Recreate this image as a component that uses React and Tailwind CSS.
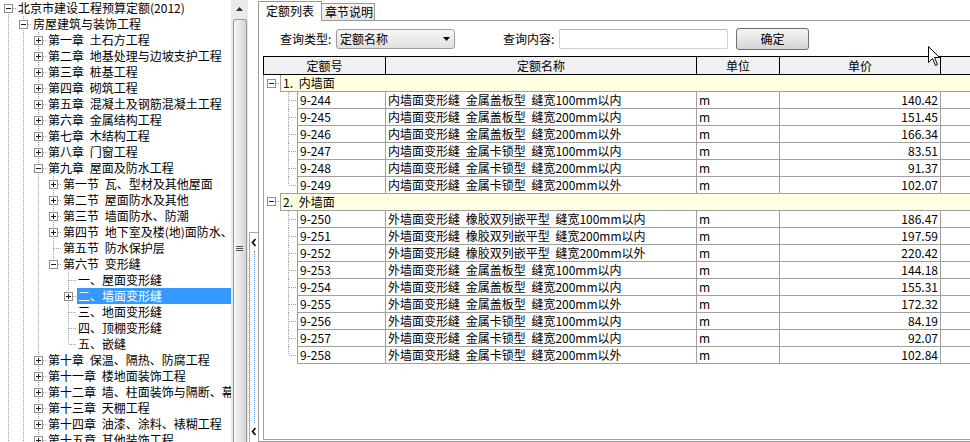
import React from "react";

const treeRows = [
  { level: 0, label: "北京市建设工程预算定额(2012)", box: "minus" },
  { level: 1, label: "房屋建筑与装饰工程", box: "minus" },
  { level: 2, label: "第一章 土石方工程", box: "plus" },
  { level: 2, label: "第二章 地基处理与边坡支护工程", box: "plus" },
  { level: 2, label: "第三章 桩基工程", box: "plus" },
  { level: 2, label: "第四章 砌筑工程", box: "plus" },
  { level: 2, label: "第五章 混凝土及钢筋混凝土工程", box: "plus" },
  { level: 2, label: "第六章 金属结构工程", box: "plus" },
  { level: 2, label: "第七章 木结构工程", box: "plus" },
  { level: 2, label: "第八章 门窗工程", box: "plus" },
  { level: 2, label: "第九章 屋面及防水工程", box: "minus" },
  { level: 3, label: "第一节 瓦、型材及其他屋面", box: "plus" },
  { level: 3, label: "第二节 屋面防水及其他", box: "plus" },
  { level: 3, label: "第三节 墙面防水、防潮", box: "plus" },
  { level: 3, label: "第四节 地下室及楼(地)面防水、防潮", box: "plus" },
  { level: 3, label: "第五节 防水保护层" },
  { level: 3, label: "第六节 变形缝", box: "minus" },
  { level: 4, label: "一、屋面变形缝" },
  { level: 4, label: "二、墙面变形缝", box: "plus", selected: true },
  { level: 4, label: "三、地面变形缝" },
  { level: 4, label: "四、顶棚变形缝" },
  { level: 4, label: "五、嵌缝" },
  { level: 2, label: "第十章 保温、隔热、防腐工程", box: "plus" },
  { level: 2, label: "第十一章 楼地面装饰工程", box: "plus" },
  { level: 2, label: "第十二章 墙、柱面装饰与隔断、幕墙工程", box: "plus" },
  { level: 2, label: "第十三章 天棚工程", box: "plus" },
  { level: 2, label: "第十四章 油漆、涂料、裱糊工程", box: "plus" },
  { level: 2, label: "第十五章 其他装饰工程", box: "plus" },
];

// the list goes on below the visible part: more siblings at levels 2, 1 and 0
const levels = [...treeRows.map((r) => r.level), 2, 1, 0];

function hasNextAt(i, level) {
  for (let j = i + 1; j < levels.length; j++) {
    if (levels[j] < level) return false;
    if (levels[j] === level) return true;
  }
  return false;
}

const groups = [
  {
    title: "1. 内墙面",
    items: [
      ["9-244", "内墙面变形缝 金属盖板型 缝宽100mm以内", "140.42"],
      ["9-245", "内墙面变形缝 金属盖板型 缝宽200mm以内", "151.45"],
      ["9-246", "内墙面变形缝 金属盖板型 缝宽200mm以外", "166.34"],
      ["9-247", "内墙面变形缝 金属卡锁型 缝宽100mm以内", "83.51"],
      ["9-248", "内墙面变形缝 金属卡锁型 缝宽200mm以内", "91.37"],
      ["9-249", "内墙面变形缝 金属卡锁型 缝宽200mm以外", "102.07"],
    ],
  },
  {
    title: "2. 外墙面",
    items: [
      ["9-250", "外墙面变形缝 橡胶双列嵌平型 缝宽100mm以内", "186.47"],
      ["9-251", "外墙面变形缝 橡胶双列嵌平型 缝宽200mm以内", "197.59"],
      ["9-252", "外墙面变形缝 橡胶双列嵌平型 缝宽200mm以外", "220.42"],
      ["9-253", "外墙面变形缝 金属盖板型 缝宽100mm以内", "144.18"],
      ["9-254", "外墙面变形缝 金属盖板型 缝宽200mm以内", "155.31"],
      ["9-255", "外墙面变形缝 金属盖板型 缝宽200mm以外", "172.32"],
      ["9-256", "外墙面变形缝 金属卡锁型 缝宽100mm以内", "84.19"],
      ["9-257", "外墙面变形缝 金属卡锁型 缝宽200mm以内", "92.07"],
      ["9-258", "外墙面变形缝 金属卡锁型 缝宽200mm以外", "102.84"],
    ],
  },
];

const DOT = { stroke: "#a0a0a0", strokeDasharray: "1 1" };

function ExpandBox({ box }) {
  return (
    <>
      <rect x="3.5" y="4.5" width="8" height="8" fill="#fff" stroke="#8f8f8f" />
      <line x1="5" y1="8.5" x2="10" y2="8.5" stroke="#1c1c1c" />
      {box === "plus" && <line x1="7.5" y1="6" x2="7.5" y2="11" stroke="#1c1c1c" />}
    </>
  );
}

function Connector({ top, bottom, box, width = 15, height = 16 }) {
  return (
    <svg width={width} height={height} className="block shrink-0">
      {top && <line x1="7.5" y1="0" x2="7.5" y2="8" {...DOT} />}
      {bottom && <line x1="7.5" y1="8" x2="7.5" y2={height} {...DOT} />}
      <line x1="8" y1="8.5" x2={width} y2="8.5" {...DOT} />
      {box && <ExpandBox box={box} />}
    </svg>
  );
}

function Guide({ on }) {
  return (
    <svg width="15" height="16" className="block shrink-0">
      {on && <line x1="7.5" y1="0" x2="7.5" y2="16" {...DOT} />}
    </svg>
  );
}

function Chevron() {
  return (
    <svg width="6" height="9" className="block">
      <polyline points="4.5,1 1.5,4.5 4.5,8" fill="none" stroke="#000" strokeWidth="1.6" />
    </svg>
  );
}

function TreePanel() {
  return (
    <div className="w-[248px] h-full flex bg-white">
      <div className="w-[231px] h-full overflow-hidden">
        {treeRows.map((r, i) => (
          <div key={i} className="flex h-[16px] pl-px">
            {Array.from({ length: r.level }).map((_, a) => (
              <Guide key={a} on={hasNextAt(i, a)} />
            ))}
            <Connector top={i > 0} bottom={hasNextAt(i, r.level)} box={r.box} />
            <div
              className={`ml-px pl-px flex-1 whitespace-nowrap leading-[16px] ${
                r.selected ? "bg-[#3399ff] text-white" : "text-black"
              }`}
            >
              {r.label}
            </div>
          </div>
        ))}
      </div>
      <div className="w-[17px] h-full bg-[#e9e9e9] flex flex-col items-center">
        <div className="h-[18px] w-full flex items-center justify-center">
          <svg width="7" height="4" className="block">
            <polygon points="0,4 3.5,0 7,4" fill="#333" />
          </svg>
        </div>
        <div className="mt-px w-[14px] flex-1 rounded-t-[3px] border border-b-0 border-[#9a9a9a] bg-gradient-to-r from-[#f7f7f7] via-[#e8e8e8] to-[#d3d3d3] flex flex-col items-center">
          <svg width="7" height="6" className="block mt-[226px]">
            <line x1="0" y1="0.5" x2="7" y2="0.5" stroke="#555" />
            <line x1="0" y1="2.5" x2="7" y2="2.5" stroke="#555" />
            <line x1="0" y1="4.5" x2="7" y2="4.5" stroke="#555" />
          </svg>
        </div>
      </div>
    </div>
  );
}

function Splitter() {
  return (
    <div className="w-[10px] h-full flex flex-col bg-white">
      <div className="h-[232px]" />
      <div className="flex-1 ml-px border-l border-t border-[#a8a8a8] bg-white flex flex-col items-center pt-[5px] pb-[6px]">
        <Chevron />
        <div className="flex-1 my-[4px] border-l border-dotted border-[#5a8fd8]" />
        <Chevron />
      </div>
    </div>
  );
}

function QueryBar() {
  return (
    <div className="flex items-center h-[22px] pl-[21px]">
      <span className="w-[56px]">查询类型:</span>
      <div className="w-[119px] h-[20px] rounded-[3px] border border-[#9c9c9c] bg-gradient-to-b from-[#f6f6f6] to-[#e0e0e0] flex items-center pl-[3px] pr-[4px]">
        <span className="flex-1 leading-[16px]">定额名称</span>
        <svg width="7" height="4" className="block">
          <polygon points="0,0 7,0 3.5,4" fill="#000" />
        </svg>
      </div>
      <span className="ml-[48px] w-[56px]">查询内容:</span>
      <div className="w-[169px] h-[20px] rounded-[2px] border border-[#cfcfcf] border-t-[#b5b5b5] bg-white" />
      <button
        type="button"
        className="ml-[8px] w-[73px] h-[22px] rounded-[3px] border border-[#707070] bg-gradient-to-b from-[#f3f3f3] via-[#e6e6e6] to-[#d4d4d4] text-[12px] leading-[16px] text-black"
      >
        确定
      </button>
    </div>
  );
}

function GroupRow({ title, first }) {
  return (
    <div className={`flex ${first ? "h-[17px]" : "h-[18px] -mt-px"}`}>
      <Connector width={16} height={first ? 17 : 18} box="minus" />
      <div
        className={`flex-1 bg-[#ffffe1] border-l border-b border-[#a0a0a0] pl-[2px] leading-[16px] ${
          first ? "" : "border-t"
        }`}
      >
        {title}
      </div>
    </div>
  );
}

function DataRow({ code, name, price, last }) {
  return (
    <div className="flex h-[17px]">
      <div className="w-[17px] shrink-0" />
      <Connector width={16} height={17} top bottom={!last} />
      <div className="w-[89px] shrink-0 border-l border-r border-b border-[#a0a0a0] pl-[2px] leading-[16px]">{code}</div>
      <div className="w-[311px] shrink-0 border-r border-b border-[#a0a0a0] pl-[2px] leading-[16px] whitespace-nowrap">{name}</div>
      <div className="w-[83px] shrink-0 border-r border-b border-[#a0a0a0] pl-[2px] leading-[16px]">m</div>
      <div className="w-[161px] shrink-0 border-r border-b border-[#a0a0a0] pr-[2px] text-right leading-[16px]">{price}</div>
      <div className="flex-1 border-b border-[#a0a0a0]" />
    </div>
  );
}

function QuotaTable() {
  return (
    <div className="ml-[4px] h-[384px] flex flex-col">
      <div className="flex h-[19px] border-t border-b border-l border-black bg-[#f0f0f0] leading-[17px] text-center">
        <div className="w-[122px] shrink-0 border-r border-black">定额号</div>
        <div className="w-[311px] shrink-0 border-r border-black">定额名称</div>
        <div className="w-[83px] shrink-0 border-r border-black">单位</div>
        <div className="w-[161px] shrink-0 border-r border-black">单价</div>
        <div className="flex-1" />
      </div>
      <div className="flex-1 border-l border-b border-[#a0a0a0] overflow-hidden bg-white">
        {groups.map((g, gi) => (
          <React.Fragment key={g.title}>
            <GroupRow title={g.title} first={gi === 0} />
            {g.items.map(([code, name, price], k) => (
              <DataRow key={code} code={code} name={name} price={price} last={k === g.items.length - 1} />
            ))}
          </React.Fragment>
        ))}
      </div>
    </div>
  );
}

function RightPanel() {
  return (
    <div className="flex-1 h-full flex flex-col bg-white">
      <div className="h-[20px] flex items-end">
        <div className="relative z-10 -mb-px h-[20px] w-[64px] border-t border-l border-r border-[#9a9a9a] bg-white pl-[7px] leading-[17px]">
          定额列表
        </div>
        <div className="h-[17px] w-[53px] border-t border-r border-[#9a9a9a] bg-gradient-to-b from-[#f7f7f7] to-[#e6e6e6] pl-[3px] leading-[16px]">
          章节说明
        </div>
      </div>
      <div className="flex-1 border-l border-t border-b border-[#9a9a9a] flex flex-col pt-[7px]">
        <QueryBar />
        <div className="h-[6px]" />
        <QuotaTable />
      </div>
    </div>
  );
}

export default function App() {
  return (
    <div className="relative w-[970px] h-[442px] overflow-hidden flex bg-white text-black text-[12px] leading-[16px] font-['Noto_Sans_CJK_SC',sans-serif] [word-spacing:3px]">
      <TreePanel />
      <Splitter />
      <RightPanel />
      <svg width="13" height="21" className="absolute left-[928px] top-[46px]">
        <path d="M0.5 0.5 L0.5 16.5 L4.5 12.5 L7.5 19.5 L9.5 18.5 L6.5 11.5 L11.5 11.5 Z" fill="#fff" stroke="#000" />
      </svg>
    </div>
  );
}
